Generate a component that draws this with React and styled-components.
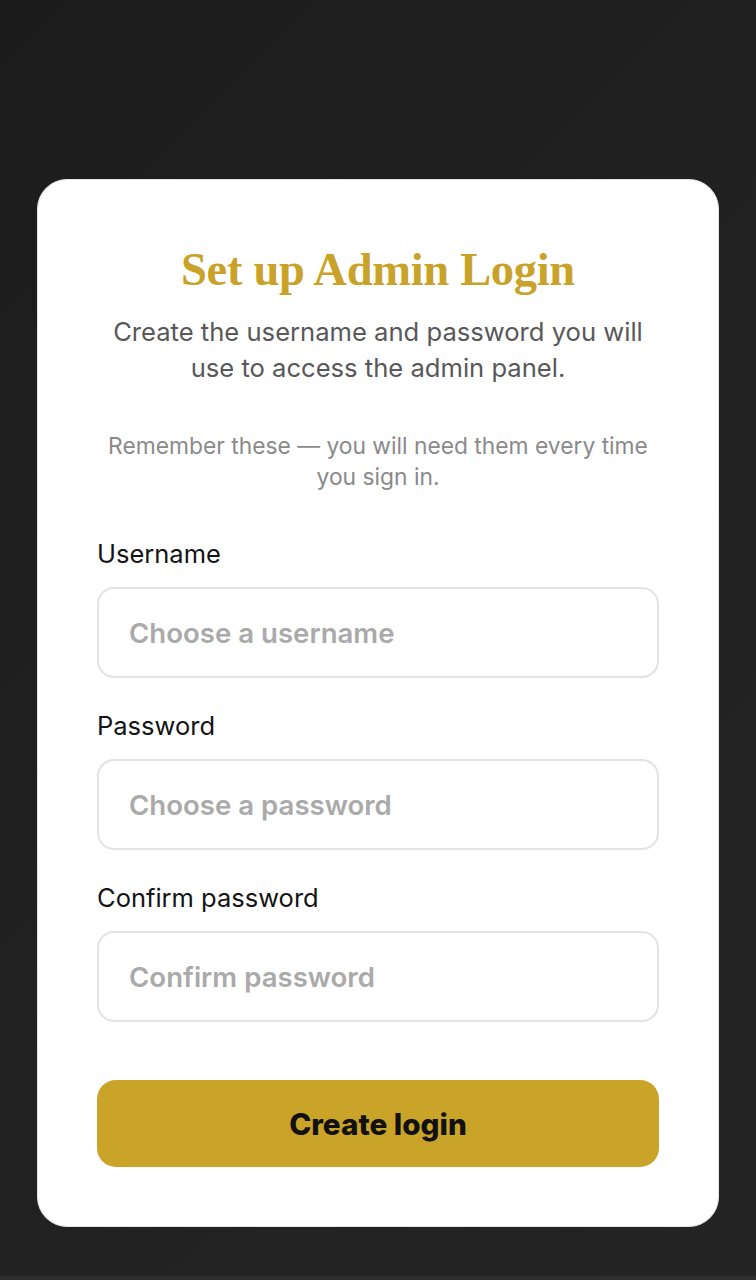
import React from 'react';
import styled, { createGlobalStyle } from 'styled-components';

const GlobalStyle = createGlobalStyle`
  html, body {
    margin: 0;
    padding: 0;
    background: #202020;
  }
  body {
    font-family: "Inter", "DejaVu Sans", sans-serif;
  }
`;

const Page = styled.div`
  min-height: 1280px;
  box-sizing: border-box;
  background: linear-gradient(135deg, #1c1c1c 0%, #222222 60%, #242424 100%);
  padding: 179px 37px 0;
  border-bottom: 4px solid #2e2e2e;
`;

const Card = styled.div`
  background: #ffffff;
  border: 1px solid #e4e4e4;
  border-radius: 30px;
  padding: 62px 59px 59px;
  display: flex;
  flex-direction: column;
`;

const Title = styled.h1`
  margin: 0;
  text-align: center;
  font-family: "Liberation Serif", "DejaVu Serif", serif;
  font-weight: 700;
  font-size: 46.5px;
  line-height: 56px;
  color: #c9a22a;
  letter-spacing: -0.3px;
`;

const Lead = styled.p`
  margin: 16px 0 0;
  text-align: center;
  font-size: 25.6px;
  line-height: 36px;
  color: #585858;
  font-weight: 400;
  white-space: nowrap;
`;

const Note = styled.p`
  margin: 44px 0 0;
  text-align: center;
  font-size: 22.8px;
  line-height: 31px;
  color: #8a8a8a;
  white-space: nowrap;
`;

const Form = styled.form`
  margin-top: 47px;
  display: flex;
  flex-direction: column;
`;

const Field = styled.div`
  display: flex;
  flex-direction: column;
  gap: 18px;
  margin-bottom: 33px;
`;

const Label = styled.label`
  font-size: 25.5px;
  line-height: 30px;
  color: #141414;
`;

const Input = styled.input`
  box-sizing: border-box;
  height: 91px;
  width: 100%;
  border: 2px solid #e3e3e3;
  border-radius: 17px;
  padding: 0 30px;
  font-family: "Inter", sans-serif;
  font-size: 27.6px;
  font-weight: 600;
  color: #222;
  background: #fff;
  outline: none;
  &::placeholder {
    color: #aaaaaa;
  }
`;

const Submit = styled.button`
  margin-top: 25px;
  height: 87px;
  border: none;
  border-radius: 19px;
  background: #c9a428;
  color: #111;
  font-family: "Inter", sans-serif;
  font-size: 29.7px;
  font-weight: 800;
  cursor: pointer;
`;

const fields = [
  { id: 'username', label: 'Username', placeholder: 'Choose a username', type: 'text' },
  { id: 'password', label: 'Password', placeholder: 'Choose a password', type: 'password' },
  { id: 'confirm', label: 'Confirm password', placeholder: 'Confirm password', type: 'password' },
];

export default function App() {
  return (
    <>
      <GlobalStyle />
      <Page>
        <Card>
          <Title>Set up Admin Login</Title>
          <Lead>
            Create the username and password you will
            <br />
            use to access the admin panel.
          </Lead>
          <Note>
            Remember these — you will need them every time
            <br />
            you sign in.
          </Note>
          <Form onSubmit={(e) => e.preventDefault()}>
            {fields.map((f) => (
              <Field key={f.id}>
                <Label htmlFor={f.id}>{f.label}</Label>
                <Input id={f.id} type={f.type} placeholder={f.placeholder} />
              </Field>
            ))}
            <Submit type="submit">Create login</Submit>
          </Form>
        </Card>
      </Page>
    </>
  );
}
